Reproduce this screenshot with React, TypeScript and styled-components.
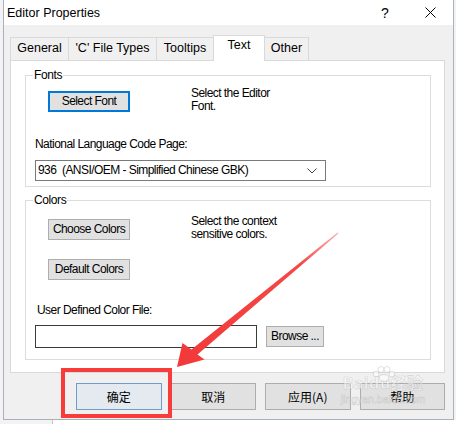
import React from "react";
import styled, { createGlobalStyle } from "styled-components";

const UI = `"Liberation Sans", Arial, sans-serif`;
const DLG = `"Liberation Sans", Arial, sans-serif`;
const CJK = `"Noto Sans CJK SC", "Liberation Sans", sans-serif`;

const Global = createGlobalStyle`
  html, body { margin: 0; padding: 0; background: #f3f3f3; }
  body { width: 456px; height: 424px; overflow: hidden; }
  * { box-sizing: border-box; }
`;

const Screen = styled.div`
  position: relative;
  width: 456px;
  height: 424px;
  background: #f3f3f3;
  overflow: hidden;
  display: flex;
  flex-direction: column;
`;

const Window = styled.div`
  margin-left: 3px;
  width: 451px;
  height: 420px;
  flex: none;
  border: 1px solid #a9b1bb;
  border-top: none;
  background: #f0f0f0;
  display: flex;
  flex-direction: column;
`;

const Backdrop = styled.div`
  flex: 1;
  background: #fff;
  border-left: 1px solid #c8c8c8;
  margin-left: 52px;
`;

const TitleBar = styled.div`
  height: 25px;
  flex: none;
  background: #fff;
  display: flex;
  align-items: center;
  padding-left: 3px;
  font: 12.5px ${UI};
  color: #000;
`;

const Title = styled.span`
  flex: 1;
  margin-top: 1px;
`;

const CaptionButton = styled.div<{ $w: number }>`
  width: ${(p) => p.$w}px;
  height: 25px;
  display: flex;
  align-items: center;
  justify-content: center;
  font: 14px ${UI};
  color: #000;
`;

const Body = styled.div`
  flex: 1;
  display: flex;
  flex-direction: column;
  padding: 10px 8px 0 6px;
`;

const TabStrip = styled.div`
  display: flex;
  align-items: flex-end;
  height: 25px;
  position: relative;
  z-index: 1;
`;

const Tab = styled.div<{ $w: number; $active?: boolean }>`
  width: ${(p) => p.$w}px;
  height: ${(p) => (p.$active ? 26 : 23)}px;
  margin-left: -1px;
  margin-bottom: ${(p) => (p.$active ? -1 : 0)}px;
  &:first-child { margin-left: 0; }
  border: 1px solid #d9d9d9;
  border-bottom: none;
  background: ${(p) => (p.$active ? "#fff" : "#f0f0f0")};
  padding-top: ${(p) => (p.$active ? 2 : 3)}px;
  text-align: center;
  font: 12.5px/15px ${UI};
  color: #000;
  white-space: pre;
`;

const Panel = styled.div`
  height: 313px;
  flex: none;
  border: 1px solid #d9d9d9;
  background: #fff;
  padding: 8px 13px 0 14px;
  display: flex;
  flex-direction: column;
  font: 12px/13px ${DLG};
  letter-spacing: -0.55px;
  color: #000;
`;

const Group = styled.fieldset<{ $mt?: number; $pb: number }>`
  margin: ${(p) => p.$mt ?? 0}px 0 0 0;
  border: 1px solid #dcdcdc;
  padding: 0 9px ${(p) => p.$pb}px 9px;
  min-width: 0;
  display: flex;
  flex-direction: column;
`;

const Legend = styled.legend`
  padding: 0 1px;
  margin-left: -2px;
  font: 12px/13px ${DLG};
  letter-spacing: -0.4px;
`;

const ActionRow = styled.div<{ $mt: number }>`
  margin-top: ${(p) => p.$mt}px;
  display: grid;
  grid-template-columns: 82px 1fr;
  column-gap: 61px;
  padding-left: 13px;
  align-items: start;
`;

const Button = styled.button<{ $focus?: boolean; $mt?: number; $w?: number }>`
  width: ${(p) => p.$w ?? 82}px;
  height: 21px;
  margin: ${(p) => p.$mt ?? 0}px 0 0 0;
  padding: 0;
  background: #e1e1e1;
  border: ${(p) => (p.$focus ? "2px solid #0078d7" : "1px solid #adadad")};
  font: 12px/13px ${DLG};
  letter-spacing: -0.55px;
  white-space: nowrap;
  color: #000;
  display: flex;
  align-items: center;
  justify-content: center;
`;

const Description = styled.div`
  display: flex;
  flex-direction: column;
  line-height: 13px;
  margin-top: 1px;
`;

const FieldLabel = styled.div<{ $mt: number; $ml?: number }>`
  margin-top: ${(p) => p.$mt}px;
  margin-left: ${(p) => p.$ml ?? 0}px;
`;

const Combo = styled.div`
  margin-top: 9px;
  width: 291px;
  height: 21px;
  border: 1px solid #7a7a7a;
  background: #fff;
  display: flex;
  align-items: center;
  padding: 0 8px 0 2px;
  white-space: pre;
`;

const ComboText = styled.span`
  flex: 1;
`;

const FileRow = styled.div`
  margin-top: 8px;
  display: flex;
  align-items: flex-start;
  gap: 9px;
`;

const TextInput = styled.div`
  width: 222px;
  height: 23px;
  border: 1px solid #3a3a3a;
  background: #fff;
`;

const DialogButtons = styled.div`
  margin-top: 10px;
  padding-left: 66px;
  display: flex;
  gap: 9px;
`;

const DialogButton = styled.div<{ $default?: boolean }>`
  width: 86px;
  height: 27px;
  background: ${(p) => (p.$default ? "#e4eaf0" : "#e1e1e1")};
  border: 1px solid ${(p) => (p.$default ? "#6f9cc8" : "#adadad")};
  display: flex;
  align-items: center;
  justify-content: center;
  font: 12px ${CJK};
  color: #000;
`;

const Overlay = styled.svg`
  position: absolute;
  left: 0;
  top: 0;
  width: 456px;
  height: 424px;
  pointer-events: none;
`;

const Highlight = styled.div`
  position: absolute;
  left: 61px;
  top: 368px;
  width: 111px;
  height: 50px;
  border: 4px solid #f83b3b;
  pointer-events: none;
`;

const Watermark = styled.div`
  position: absolute;
  left: 337px;
  top: 366px;
  width: 92px;
  display: flex;
  flex-direction: column;
  align-items: center;
  pointer-events: none;
  color: rgba(255, 255, 255, 0.5);
  -webkit-text-stroke: 0.6px rgba(160, 160, 160, 0.4);
`;

const WatermarkMain = styled.div`
  font: bold 16px/18px ${CJK};
  margin-top: 7px;
  letter-spacing: 0.5px;
`;

const WatermarkSub = styled.div`
  font: 10.5px/12px ${UI};
  margin-top: 2px;
`;

const Paw = styled.svg`
  position: absolute;
  left: 34px;
  top: 0;
`;

export default function App() {
  return (
    <>
      <Global />
      <Screen>
        <Window>
          <TitleBar>
            <Title>Editor Properties</Title>
            <CaptionButton $w={46}>?</CaptionButton>
            <CaptionButton $w={45}>
              <svg width="11" height="11" viewBox="0 0 11 11">
                <path d="M0.5 0.5 L10.5 10.5 M10.5 0.5 L0.5 10.5" stroke="#000" strokeWidth="1" fill="none" />
              </svg>
            </CaptionButton>
          </TitleBar>
          <Body>
            <TabStrip>
              <Tab $w={59}>General</Tab>
              <Tab $w={89}>'C' File Types</Tab>
              <Tab $w={58}>Tooltips</Tab>
              <Tab $w={52} $active>Text</Tab>
              <Tab $w={45}>Other</Tab>
            </TabStrip>
            <Panel>
              <Group $pb={5}>
                <Legend>Fonts</Legend>
                <ActionRow $mt={4}>
                  <Button $focus $mt={5}>Select Font</Button>
                  <Description>
                    <span>Select the Editor</span>
                    <span>Font.</span>
                  </Description>
                </ActionRow>
                <FieldLabel $mt={25}>National Language Code Page:</FieldLabel>
                <Combo>
                  <ComboText>936  (ANSI/OEM - Simplified Chinese GBK)</ComboText>
                  <svg width="10" height="6" viewBox="0 0 10 6">
                    <path d="M0.5 0.5 L5 5 L9.5 0.5" stroke="#444" strokeWidth="1" fill="none" />
                  </svg>
                </Combo>
              </Group>
              <Group $mt={7} $pb={11}>
                <Legend>Colors</Legend>
                <ActionRow $mt={7}>
                  <Button $mt={5}>Choose Colors</Button>
                  <Description>
                    <span>Select the context</span>
                    <span>sensitive colors.</span>
                  </Description>
                </ActionRow>
                <ActionRow $mt={18}>
                  <Button>Default Colors</Button>
                </ActionRow>
                <FieldLabel $mt={24} $ml={2}>User Defined Color File:</FieldLabel>
                <FileRow>
                  <TextInput />
                  <Button $w={58} $mt={1}>Browse ...</Button>
                </FileRow>
              </Group>
            </Panel>
            <DialogButtons>
              <DialogButton $default>确定</DialogButton>
              <DialogButton>取消</DialogButton>
              <DialogButton>应用(A)</DialogButton>
              <DialogButton>帮助</DialogButton>
            </DialogButtons>
          </Body>
        </Window>
        <Backdrop />
        <Highlight />
        <Overlay viewBox="0 0 456 424">
          <defs>
            <linearGradient id="shaft" x1="338" y1="233" x2="190" y2="355" gradientUnits="userSpaceOnUse">
              <stop offset="0" stopColor="#ffb0b0" />
              <stop offset="0.25" stopColor="#f54848" />
              <stop offset="1" stopColor="#f23a3a" />
            </linearGradient>
          </defs>
          <polygon
            points="337.6,232.4 338.4,233.6 197.5,354.5 204.5,359.5 177,367 182.5,343 191.5,349.5"
            fill="url(#shaft)"
          />
        </Overlay>
        <Watermark>
          <Paw width="26" height="16" viewBox="0 0 26 16">
            <g fill="rgba(255,255,255,0.5)" stroke="rgba(160,160,160,0.4)" strokeWidth="0.8">
              <circle cx="5" cy="8" r="3" />
              <circle cx="10" cy="3.5" r="3" />
              <circle cx="16" cy="3.5" r="3" />
              <circle cx="21" cy="8" r="3" />
              <ellipse cx="13" cy="12" rx="5" ry="3.5" />
            </g>
          </Paw>
          <WatermarkMain>Baidu经验</WatermarkMain>
          <WatermarkSub>jingyan.baidu.com</WatermarkSub>
        </Watermark>
      </Screen>
    </>
  );
}
